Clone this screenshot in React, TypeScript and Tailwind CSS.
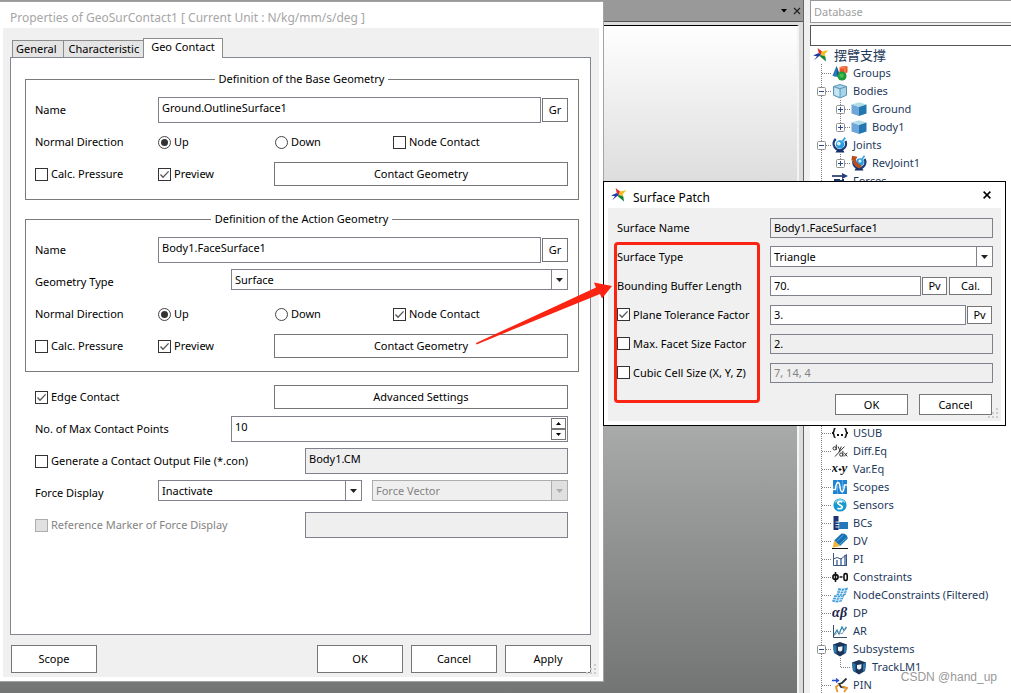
import { useId } from "react";
import type { ReactNode } from "react";

/* ---------- Form controls ---------- */

function Button({ children, className = "" }: { children: ReactNode; className?: string }) {
  return (
    <button type="button" className={`border border-[#767676] bg-white text-center ${className}`}>
      {children}
    </button>
  );
}

function CheckBox({ label, checked = false, disabled = false }: { label: string; checked?: boolean; disabled?: boolean }) {
  return (
    <label className={`flex items-center gap-[3px] whitespace-nowrap ${disabled ? "text-[#838383]" : ""}`}>
      <span className="relative block size-[13px] shrink-0">
        <input
          type="checkbox"
          defaultChecked={checked}
          disabled={disabled}
          className="peer block size-[13px] appearance-none border border-[#333333] bg-white disabled:border-[#adadad] disabled:bg-[#e0e0e0]"
        />
        <svg viewBox="0 0 13 13" className="pointer-events-none absolute inset-0 hidden size-[13px] peer-checked:block">
          <path d="M2.5 6.5 5 9.2 10.6 3.4" fill="none" stroke="#555" strokeWidth="1.3" />
        </svg>
      </span>
      {label}
    </label>
  );
}

function Radio({ label, name, checked = false }: { label: string; name: string; checked?: boolean }) {
  return (
    <label className="flex items-center gap-[3px] whitespace-nowrap">
      <span className="relative block size-[13px] shrink-0">
        <input
          type="radio"
          name={name}
          defaultChecked={checked}
          className="peer block size-[13px] appearance-none rounded-full border border-[#444444] bg-white"
        />
        <span className="pointer-events-none absolute inset-[3px] hidden rounded-full bg-[#333333] peer-checked:block" />
      </span>
      {label}
    </label>
  );
}

function TextBox({ id, label, value, disabled = false, readOnly = false, className = "" }: {
  id?: string; label?: string; value: string; disabled?: boolean; readOnly?: boolean; className?: string;
}) {
  return (
    <input
      id={id}
      aria-label={label}
      type="text"
      defaultValue={value}
      disabled={disabled}
      readOnly={readOnly}
      className={`w-full min-w-0 border border-[#7f828c] px-[3px] disabled:text-[#838383] ${readOnly || disabled ? "bg-[#efefef]" : "bg-white"} ${className}`}
    />
  );
}

function Select({ id, label, value, disabled = false }: { id?: string; label?: string; value: string; disabled?: boolean }) {
  return (
    <div className="relative h-[21px] w-full">
      <select
        id={id}
        aria-label={label}
        disabled={disabled}
        className="h-[21px] w-full appearance-none border border-[#7f828c] bg-white pl-[3px] pr-5 opacity-100 disabled:border-[#adadad] disabled:bg-[#efefef] disabled:text-[#838383]"
      >
        <option>{value}</option>
      </select>
      <span
        className={`pointer-events-none absolute inset-y-0 right-0 flex w-[17px] items-center justify-center border ${
          disabled ? "border-[#adadad] bg-[#e0e0e0] text-[#adadad]" : "border-[#7f828c] text-[#222222]"
        }`}
      >
        <svg viewBox="0 0 7 4" className="h-1 w-[7px] fill-current"><path d="M0 0h7L3.5 4z" /></svg>
      </span>
    </div>
  );
}

function SizeGrip() {
  return (
    <svg viewBox="0 0 12 12" className="absolute bottom-[2px] right-[2px] size-3 fill-[#cccccc]">
      <path d="M9 1h2v2H9zM5 5h2v2H5zM9 5h2v2H9zM1 9h2v2H1zM5 9h2v2H5zM9 9h2v2H9z" />
    </svg>
  );
}

/* ---------- Properties dialog ---------- */

function Row({ children, className = "" }: { children: ReactNode; className?: string }) {
  return <div className={`grid h-8 items-center ${className}`}>{children}</div>;
}

function GeometryGroup({ title, geometry, withType = false, nodeContact = false }: {
  title: string; geometry: string; withType?: boolean; nodeContact?: boolean;
}) {
  const id = useId();
  return (
    <fieldset className="border border-[#7b7b7b] pb-[9px] pl-[9px] pr-[10px] pt-[7px]">
      <legend className="mx-auto px-1">{title}</legend>
      <Row className="grid-cols-[123px_1fr]">
        <label htmlFor={`${id}n`}>Name</label>
        <div className="flex items-center gap-px">
          <TextBox id={`${id}n`} value={geometry} className="h-[26px] pb-[6px]" />
          <Button className="h-6 w-[26px] shrink-0">Gr</Button>
        </div>
      </Row>
      {withType && (
        <Row className="grid-cols-[196px_1fr]">
          <label htmlFor={`${id}t`}>Geometry Type</label>
          <div className="mb-[5px]"><Select id={`${id}t`} value="Surface" /></div>
        </Row>
      )}
      <Row className="grid-cols-[123px_117px_118px_1fr]">
        <span>Normal Direction</span>
        <Radio label="Up" name={id} checked />
        <Radio label="Down" name={id} />
        <CheckBox label="Node Contact" checked={nodeContact} />
      </Row>
      <Row className="grid-cols-[123px_116px_1fr]">
        <CheckBox label="Calc. Pressure" />
        <CheckBox label="Preview" checked />
        <Button className="h-6">Contact Geometry</Button>
      </Row>
    </fieldset>
  );
}

function PropertiesDialog() {
  return (
    <section className="absolute bottom-[11px] left-0 top-px flex w-[604px] flex-col border-y border-r border-[#a3a3a3] bg-white pb-1 pl-[3px] pr-1">
      <h1 className="flex h-[26px] shrink-0 items-center pl-[7px] pt-[6px] text-xs text-[#a6a6a6]">
        Properties of GeoSurContact1 [ Current Unit : N/kg/mm/s/deg ]
      </h1>
      <div className="relative flex flex-1 flex-col bg-[#f0f0f0] pb-1 pl-[7px] pr-2 pt-[10px]">
        <div role="tablist" className="flex items-end pl-[2px]">
          <button type="button" role="tab" className="h-[17px] border border-b-0 border-[#8c8c8c] bg-[#e4e4e4] pl-[3px] pr-[6px]">General</button>
          <button type="button" role="tab" className="h-[17px] border border-x-0 border-t border-b-0 border-[#8c8c8c] bg-[#e4e4e4] pl-[5px] pr-1">Characteristic</button>
          <button type="button" role="tab" aria-selected className="z-10 -mb-px h-5 border border-b-0 border-[#8c8c8c] bg-white px-[7px] pb-[3px]">Geo Contact</button>
        </div>
        <div role="tabpanel" className="flex-1 border border-[#828790] bg-white pl-[14px] pr-[11px] pt-[13px]">
          <div className="flex flex-col gap-[11px]">
            <GeometryGroup title="Definition of the Base Geometry" geometry="Ground.OutlineSurface1" />
            <GeometryGroup title="Definition of the Action Geometry" geometry="Body1.FaceSurface1" withType nodeContact />
          </div>
          <div className="pl-[10px] pr-[11px] pt-[9px]">
            <Row className="grid-cols-[239px_1fr]">
              <CheckBox label="Edge Contact" checked />
              <Button className="h-6">Advanced Settings</Button>
            </Row>
            <Row className="grid-cols-[196px_1fr]">
              <label htmlFor="max-points">No. of Max Contact Points</label>
              <div className="flex h-[26px] items-center border border-[#7f828c] pr-px">
                <input id="max-points" type="text" defaultValue="10" className="h-6 min-w-0 flex-1 px-[3px] pb-[6px]" />
                <div className="flex w-[15px] flex-col">
                  <Button className="flex h-[11px] items-center justify-center">
                    <svg viewBox="0 0 5 3" className="h-[3px] w-[5px]"><path d="M0 3h5L2.5 0z" /></svg>
                  </Button>
                  <Button className="flex h-[11px] items-center justify-center">
                    <svg viewBox="0 0 5 3" className="h-[3px] w-[5px]"><path d="M0 0h5L2.5 3z" /></svg>
                  </Button>
                </div>
              </div>
            </Row>
            <Row className="grid-cols-[270px_1fr]">
              <CheckBox label="Generate a Contact Output File (*.con)" />
              <TextBox label="Contact Output File" value="Body1.CM" readOnly className="h-[26px] pb-[6px]" />
            </Row>
            <Row className="grid-cols-[123px_204px_1fr]">
              <label htmlFor="force-display">Force Display</label>
              <div className="mb-[5px]"><Select id="force-display" value="Inactivate" /></div>
              <div className="mb-[5px] pl-[10px]"><Select label="Force Vector" value="Force Vector" disabled /></div>
            </Row>
            <Row className="grid-cols-[270px_1fr]">
              <CheckBox label="Reference Marker of Force Display" disabled />
              <TextBox label="Reference Marker" value="" readOnly className="h-[26px]" />
            </Row>
          </div>
        </div>
        <div className="flex gap-2 pl-px pt-[10px]">
          <Button className="h-7 w-[86px]">Scope</Button>
          <Button className="ml-auto h-7 w-[86px]">OK</Button>
          <Button className="h-7 w-[86px]">Cancel</Button>
          <Button className="h-7 w-[86px]">Apply</Button>
        </div>
        <SizeGrip />
      </div>
    </section>
  );
}

/* ---------- Surface Patch dialog ---------- */

function PatchRow({ children }: { children: ReactNode }) {
  return <div className="grid h-[29px] grid-cols-[153px_1fr] items-center">{children}</div>;
}

function SurfacePatchDialog() {
  return (
    <section className="absolute left-[603px] top-[181px] w-[403px] border border-black bg-white px-1 pb-1">
      <header className="flex h-[26px] items-center pl-[3px] pr-[10px] text-xs">
        <Icon name="star" />
        <h2 className="ml-[6px] mt-[6px] flex-1">Surface Patch</h2>
        <button type="button" aria-label="Close">
          <svg viewBox="0 0 8 8" className="size-2"><path d="M.6.6l6.8 6.8M7.4.6.6 7.4" stroke="#000" strokeWidth="1.5" /></svg>
        </button>
      </header>
      <div className="relative bg-[#f0f0f0] pb-[6px] pl-[9px] pr-2 pt-[5px]">
        <PatchRow>
          <label htmlFor="surface-name">Surface Name</label>
          <TextBox id="surface-name" value="Body1.FaceSurface1" readOnly className="h-5" />
        </PatchRow>
        <PatchRow>
          <label htmlFor="surface-type">Surface Type</label>
          <Select id="surface-type" value="Triangle" />
        </PatchRow>
        <PatchRow>
          <label htmlFor="buffer-length">Bounding Buffer Length</label>
          <div className="flex items-center">
            <TextBox id="buffer-length" value="70." className="h-5" />
            <Button className="ml-px h-[18px] w-[25px] shrink-0">Pv</Button>
            <Button className="ml-[2px] mr-px h-[18px] w-[43px] shrink-0">Cal.</Button>
          </div>
        </PatchRow>
        <PatchRow>
          <CheckBox label="Plane Tolerance Factor" checked />
          <div className="flex items-center">
            <TextBox label="Plane Tolerance Factor" value="3." className="h-5" />
            <Button className="ml-px mr-px h-[18px] w-[25px] shrink-0">Pv</Button>
          </div>
        </PatchRow>
        <PatchRow>
          <CheckBox label="Max. Facet Size Factor" />
          <TextBox label="Max. Facet Size Factor" value="2." readOnly className="h-5" />
        </PatchRow>
        <PatchRow>
          <CheckBox label="Cubic Cell Size (X, Y, Z)" />
          <TextBox label="Cubic Cell Size (X, Y, Z)" value="7, 14, 4" disabled className="h-5" />
        </PatchRow>
        <div className="flex justify-end gap-[11px] pr-px pt-[7px]">
          <Button className="h-[21px] w-[73px]">OK</Button>
          <Button className="h-[21px] w-[73px]">Cancel</Button>
        </div>
        <SizeGrip />
      </div>
    </section>
  );
}

/* ---------- Database tree ---------- */

type IconName =
  | "star" | "groups" | "bodies" | "cube" | "joints" | "revjoint" | "forces" | "usub" | "diff" | "vareq" | "scopes"
  | "sensors" | "bcs" | "dv" | "pi" | "constraints" | "nodes" | "dp" | "ar" | "subsystem" | "pin";

const drawings: Record<IconName, ReactNode> = {
  star: (
    <>
      <path d="M4.600 1 9 4.400 8 8 5.800 6z" fill="#e02a22" />
      <path d="M15.500 3.200 9 4.400 8 8 12.300 9.400 11.800 7z" fill="#f7bd1c" />
      <path d="M0 8.400 5.800 6 8 8 5.600 9.600 1 13.500 4 9.300z" fill="#1f3aa6" />
      <path d="M6.200 8.800 8 8 12.300 9.400 13 14.500z" fill="#14832f" />
    </>
  ),
  groups: (
    <>
      <path d="M4.5 1 8 10.5Q4 13 .5 10.5z" fill="#2a76b8" />
      <path d="M4.5 1 8 10.5 5 11.6z" fill="#15578f" />
      <path d="M7.5 2.5 10 1.2h5.5v6L13 8.8H7.5z" fill="#e8552a" />
      <path d="M7.5 2.8H13v6" fill="none" stroke="#ff9a5c" />
      <circle cx="10" cy="11" r="4.6" fill="#1e9a3c" />
      <circle cx="9.6" cy="10.6" r="2.2" fill="#47bf50" />
    </>
  ),
  bodies: (
    <>
      <path d="M1.5 3.5 8 1.5l6.5 2v8.7L8 15l-6.500-2.8z" fill="#a5d3e8" stroke="#5b95b3" />
      <path d="M1.5 3.5 8 5.8l6.5-2.3M8 5.8V15" fill="none" stroke="#5b95b3" />
      <path d="M2.5 4.8 7.3 6.4v7.2L2.5 11.6z" fill="#c5e7f3" />
    </>
  ),
  cube: (
    <>
      <path d="M.5 3.5 8 1.2l7.5 2.3L8 6z" fill="#b4dce6" />
      <path d="M.5 3.5 8 6v9L.5 12.4z" fill="#6ea6d8" />
      <path d="M15.5 3.5 8 6v9l7.5-2.6z" fill="#2277b0" />
    </>
  ),
  joints: (
    <>
      <path d="M3.8 2A6.200 6.200 0 1 0 13.400 4" fill="none" stroke="#1d3d7c" strokeWidth="2.4" />
      <path d="M5 13h6l1.5 2.6h-9z" fill="#17306a" />
      <circle cx="8" cy="7.400" r="4.200" fill="#2b9ce0" />
      <circle cx="6.800" cy="6.600" r="1.900" fill="#d8f2ff" />
      <path d="M9 6.400 13.200.6" stroke="#3aa8df" strokeWidth="1.8" />
    </>
  ),
  revjoint: (
    <>
      <path d="M4 3A6 6 0 1 0 13.400 4" fill="none" stroke="#1d3d7c" strokeWidth="2.4" />
      <path d="M5 13h6l1.5 2.6h-9z" fill="#17306a" />
      <circle cx="9" cy="7" r="3.800" fill="#2b9ce0" />
      <circle cx="9" cy="6" r="1.600" fill="#d8f2ff" />
      <path d="M10.5 5 13.5.8" stroke="#3aa8df" strokeWidth="1.6" />
      <path d="M1 .8 6.400 1.800 5 4.400Q4.800 8 10.800 10.400L8.800 13.800Q1.400 10.600 1.800 5.200L.4 5.600z" fill="#b8501e" />
    </>
  ),
  forces: (
    <>
      <path d="M0 3h11" stroke="#1b2f63" strokeWidth="1.6" />
      <path d="M10 0 16 3 10 6z" fill="#24407d" />
      <path d="M2 7h6M2 10h5M11 6v8" stroke="#1b2f63" strokeWidth="2" />
      <path d="M4 7h7v6H4z" fill="#24407d" />
    </>
  ),
  usub: (
    <>
      <path d="M3.5 3.5Q2 3.5 2 5.2 2 8-.2 8 2 8 2 10.8q0 1.7 1.5 1.7M12.5 3.5q1.5 0 1.5 1.7Q14 8 16.2 8 14 8 14 10.8q0 1.7-1.5 1.7" fill="none" stroke="#111" strokeWidth="1.5" />
      <path d="M5 9h2v2H5zM9 9h2v2H9z" fill="#111" />
    </>
  ),
  diff: (
    <>
      <path d="M3 13.5 12.5 3.5" stroke="#333" />
      <circle cx="2.6" cy="5.4" r="1.6" fill="none" stroke="#333" />
      <path d="M4.3 1.5V7M6 3.5l1.6 3.3M9.3 3.5 7 9" fill="none" stroke="#333" />
      <circle cx="9.2" cy="11.6" r="1.6" fill="none" stroke="#333" />
      <path d="M10.9 8v5.4M12.2 9.8l3 3.600M15.2 9.8l-3 3.600" fill="none" stroke="#333" />
    </>
  ),
  vareq: (
    <g fill="#111" fontFamily="Liberation Serif, serif" fontSize="13" fontStyle="italic" fontWeight="bold">
      <text x="-.5" y="10.500">x</text>
      <text x="9.500" y="10.500">y</text>
      <path d="M6.500 8.500h3M8 7v3" stroke="#111" />
    </g>
  ),
  scopes: (
    <>
      <path d="M1 1h14v14H1z" fill="#1f83d2" />
      <path d="M5.5 1v14M10.5 1v14M1 8h14" stroke="#6fb9ec" strokeWidth=".7" />
      <path d="M1 10.5h2.500Q4 3.500 6 3.500 7.600 3.500 8 8t2.200 4.800Q12 12.800 12.400 6H15" fill="none" stroke="#fff" strokeWidth="1.5" />
    </>
  ),
  sensors: (
    <>
      <circle cx="8" cy="8" r="6.6" fill="#1798cf" />
      <path d="M3 5.5A5.8 5.8 0 0 1 13 5.5" fill="none" stroke="#7bd0ef" strokeWidth="1.5" />
      <path d="M10.4 5Q8 3.6 6.3 5T8 8t1.8 3-4.4.2" fill="none" stroke="#fff" strokeWidth="1.7" />
    </>
  ),
  bcs: (
    <>
      <path d="M1.5 1h5v14h-5z" fill="#1b3570" />
      <path d="M6.5 7H16v7H6.5z" fill="#2678b8" />
      <path d="M3.5 7h4M3.5 9.5h4M3.5 12h4" stroke="#dce8f4" />
    </>
  ),
  dv: (
    <>
      <path d="M9.500.6Q15 .2 15.800 5.400L8 13 2.200 7.600z" fill="#1770b4" />
      <path d="M11.400 2 4.600 8.600M14.400 4.800 7.200 11.600" stroke="#57abd9" />
      <path d="M2.200 7.600 8 13 .6 14.700z" fill="#f2b43c" />
      <path d="M0 15.500h16" stroke="#111" />
    </>
  ),
  pi: (
    <>
      <path d="M1.5 2v12.5H15" fill="none" stroke="#3d5682" />
      <path d="M4 9h2v5H4zM8 7h2v7H8zM12 4h2v10h-2z" fill="#7a96c0" />
      <path d="M1.5 8 5 6.5 9 8l5.500-4.500V14" fill="none" stroke="#3d5682" />
    </>
  ),
  constraints: (
    <>
      <ellipse cx="3.5" cy="8" rx="2.6" ry="2.4" fill="none" stroke="#111" strokeWidth="1.6" />
      <path d="M3.5 3v10M7.500 8h3" stroke="#111" strokeWidth="1.6" />
      <rect x="12" y="4.6" width="3.2" height="6.8" rx="1.5" fill="none" stroke="#111" strokeWidth="1.6" />
    </>
  ),
  nodes: (
    <>
      <path d="M6.500 1Q11 2.600 16 .6L13.600 8Q9 9.400 4.400 8z" fill="#3d9ad8" />
      <path d="M2.500 8Q7 9.600 12.500 8L9.500 14.600Q5 16.200 0 14.600z" fill="#3d9ad8" />
      <path d="M9.700 1.500 7.200 8.600M12.900 1.400 10.200 8.600M5.700 3.600q4 1.400 9.400 0M5 6q4 1.400 9.200 0M5.600 8.600 3 15.400M9 8.800 6.300 15.300M1.600 10.200q4 1.400 9.800 0M.8 12.500q4 1.400 9.400 0" fill="none" stroke="#e4f3ff" strokeWidth=".9" />
    </>
  ),
  dp: (
    <g fill="#1b2450" fontFamily="Liberation Serif, serif" fontSize="14" fontStyle="italic" fontWeight="bold">
      <text x="0" y="11.500">α</text>
      <text x="8" y="11.500">β</text>
    </g>
  ),
  ar: (
    <>
      <path d="M1.5 2v12.5H15" fill="none" stroke="#3c4c66" />
      <path d="M2 12 5 7l2 4 3-7 2 3.500L14.500 4" fill="none" stroke="#2e83ac" strokeWidth="1.3" />
      <path d="M2 12.500 6 9l4 2 3-5" fill="none" stroke="#8ba0b6" />
    </>
  ),
  subsystem: (
    <>
      <path d="M1 3.500 8 1l7 2.500L14 12l-6 3.500L2 12z" fill="#1b3558" />
      <path d="M1 3.500 4.500 5v7.800L2 11.500z" fill="#2c76ad" />
      <path d="M15 3.500 12 5v7.800L14 11.500z" fill="#2c76ad" />
      <path d="M6 6 10.600 5.200 10.200 9.400 8 10.800 6 9.500z" fill="#eef5fa" />
    </>
  ),
  pin: (
    <>
      <path d="M0 3.5h6M4 1.5l2.500 2L4 5.500" fill="none" stroke="#2452ce" strokeWidth="1.3" />
      <path d="M14.500 1.500 10 6l-3 1 2 3 4 .5" fill="none" stroke="#28303c" strokeWidth="1.8" />
      <path d="M7 7.500 4 10l1.500 5M10 9.500l5 1.500-3 4" fill="none" stroke="#e8952c" strokeWidth="1.8" />
    </>
  ),
};

function Icon({ name }: { name: IconName }) {
  return <svg viewBox="0 0 16 16" className="size-4 shrink-0">{drawings[name]}</svg>;
}

type Node = {
  label: string;
  icon: IconName;
  child?: boolean;
  last?: boolean;
  open?: boolean;
};

const upperNodes: Node[] = [
  { label: "Groups", icon: "groups" },
  { label: "Bodies", icon: "bodies", open: true },
  { label: "Ground", icon: "cube", child: true, open: false },
  { label: "Body1", icon: "cube", child: true, last: true, open: false },
  { label: "Joints", icon: "joints", open: true },
  { label: "RevJoint1", icon: "revjoint", child: true, last: true, open: false },
  { label: "Forces", icon: "forces" },
];

const lowerNodes: Node[] = [
  { label: "USUB", icon: "usub" },
  { label: "Diff.Eq", icon: "diff" },
  { label: "Var.Eq", icon: "vareq" },
  { label: "Scopes", icon: "scopes" },
  { label: "Sensors", icon: "sensors" },
  { label: "BCs", icon: "bcs" },
  { label: "DV", icon: "dv" },
  { label: "PI", icon: "pi" },
  { label: "Constraints", icon: "constraints" },
  { label: "NodeConstraints (Filtered)", icon: "nodes" },
  { label: "DP", icon: "dp" },
  { label: "AR", icon: "ar" },
  { label: "Subsystems", icon: "subsystem", open: true },
  { label: "TrackLM1", icon: "subsystem", child: true, last: true },
  { label: "PIN", icon: "pin" },
];

function Connector({ branch = false, last = false, open }: { branch?: boolean; last?: boolean; open?: boolean }) {
  return (
    <svg viewBox="0 0 19 18" className="h-[18px] w-[19px] shrink-0" stroke="#808080">
      <path d={last ? "M9.5 0v9" : "M9.5 0v18"} strokeDasharray="1 1" />
      {branch && <path d="M10 9.5h9" strokeDasharray="1 1" />}
      {open !== undefined && (
        <>
          <rect x="5.5" y="5.5" width="8" height="8" rx="1" fill="#fff" stroke="#919191" />
          <path d={open ? "M7 9.5h5" : "M7 9.5h5M9.5 7v5"} stroke="#2b4a94" />
        </>
      )}
    </svg>
  );
}

function TreeRow({ node }: { node: Node }) {
  return (
    <li className="flex h-[18px] items-center whitespace-nowrap">
      {node.child && <Connector />}
      <Connector branch last={node.last} open={node.open} />
      <span className="ml-px mr-[5px] flex"><Icon name={node.icon} /></span>
      {node.label}
    </li>
  );
}

function DatabasePanel() {
  return (
    <aside className="flex w-[201px] shrink-0 flex-col overflow-hidden bg-[#f0f0f0]">
      <h2 className="flex h-[23px] shrink-0 items-center border border-r-0 border-[#999999] bg-white pl-[3px] text-[#a0a0a0]">Database</h2>
      <input aria-label="Search" type="text" className="mt-[2px] h-[21px] shrink-0 border border-r-0 border-[#555555] bg-white px-1" />
      <div className="min-h-0 flex-1 overflow-hidden bg-white pl-[2px] text-[#1e395b]">
        <div className="flex h-[18px] items-center gap-[5px] pl-px text-[13px]">
          <Icon name="star" />
          摆臂支撑
        </div>
        <ul>{upperNodes.map((n) => <TreeRow key={n.label} node={n} />)}</ul>
        <div className="ml-[9px] h-[234px] border-l border-dotted border-[#808080]" />
        <ul>{lowerNodes.map((n) => <TreeRow key={n.label} node={n} />)}</ul>
      </div>
    </aside>
  );
}

/* ---------- Workspace ---------- */

function Viewport() {
  return (
    <main className="flex min-w-0 flex-1 flex-col border-r border-[#666666] bg-[#999999]">
      <div className="flex h-[21px] shrink-0 items-center justify-end gap-[6px] pr-[2px]">
        <svg viewBox="0 0 6 4" className="h-1 w-[6px]"><path d="M0 0h6L3 3.5z" /></svg>
        <svg viewBox="0 0 8 8" className="size-2"><path d="M1 1l6 6M7 1 1 7" stroke="#222" strokeWidth="1.2" /></svg>
      </div>
      <div className="flex flex-1 border-t border-[#555555] bg-[#dcdcdc] pr-1 pt-[3px]">
        <div className="flex-1 border-r-2 border-t border-r-[#f4f4f4] border-t-black bg-linear-to-b from-white to-[#737574]" />
      </div>
    </main>
  );
}

export default function App() {
  return (
    <div className="relative flex h-screen overflow-hidden bg-[#f0f0f0] font-['Noto_Sans','Noto_Sans_CJK_SC',sans-serif] text-[11px] leading-4 text-black">
      <Viewport />
      <div className="w-[6px] shrink-0" />
      <DatabasePanel />
      <PropertiesDialog />
      <SurfacePatchDialog />
      <div className="pointer-events-none absolute left-[614px] top-[242px] h-[161px] w-[146px] rounded-[4px] border-3 border-[#fb2412]" />
      <svg viewBox="0 0 140 64" className="pointer-events-none absolute left-[474px] top-[282px] h-16 w-[140px]">
        <path d="M2 61 122 5.500 120 .5 138 4 128 16.500 126 12 2.500 62.500z" fill="#fb2412" />
      </svg>
      <p className="absolute bottom-2 right-[14px] font-['Liberation_Sans',sans-serif] text-xs text-[#999999]">CSDN @hand_up</p>
    </div>
  );
}
